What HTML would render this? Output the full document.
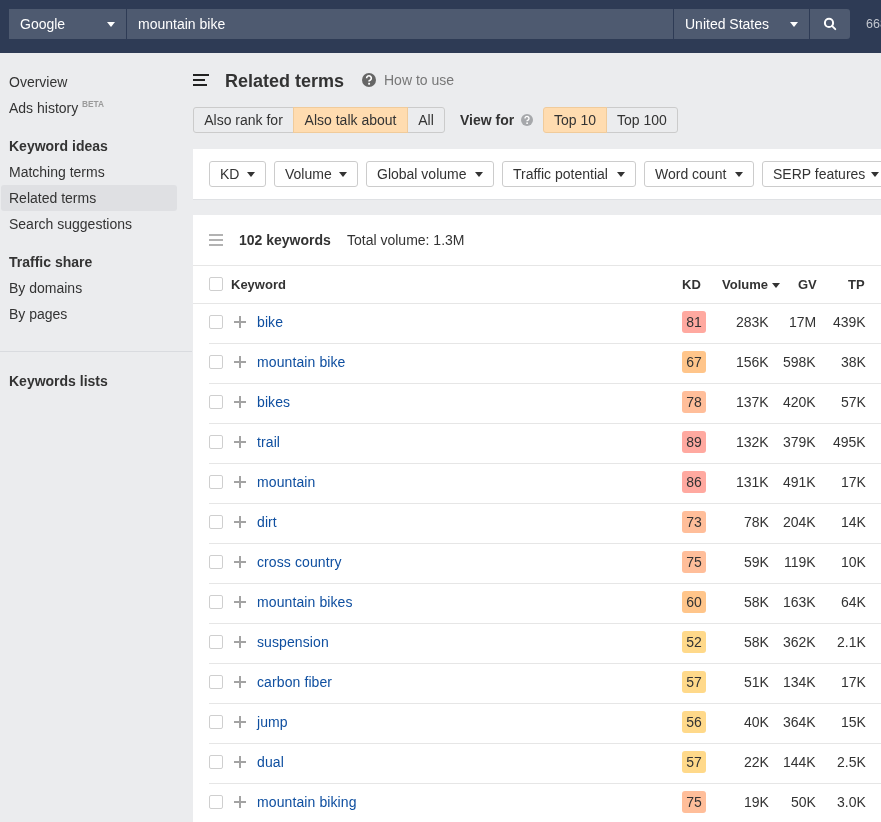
<!DOCTYPE html>
<html><head><meta charset="utf-8">
<style>
*{box-sizing:border-box;margin:0;padding:0}
html,body{width:881px;height:822px;overflow:hidden}
body>*{will-change:transform}
body{font-family:"Liberation Sans",sans-serif;background:#ebecee;color:#333;font-size:14px;position:relative}
.abs{position:absolute;white-space:nowrap}
#hdr{position:absolute;left:0;top:0;width:881px;height:53px;background:#2e3b55}
.inp{position:absolute;top:9px;height:30px;background:#4e5a70;color:#fff;font-size:14px;line-height:30px}
.caret{position:absolute;width:0;height:0;border-left:4px solid transparent;border-right:4px solid transparent;border-top:5px solid #fff}
.side{position:absolute;left:9px;font-size:14px;color:#333;white-space:nowrap}
.sb{font-weight:bold}
.btn{position:absolute;top:107px;height:26px;border:1px solid #cbcbcb;background:#ebecee;font-size:14px;line-height:24px;color:#333;text-align:center}
.on{background:#ffdcb0;border-color:#f0cb9b}
.panel{position:absolute;left:193px;background:#fff}
.fb{position:absolute;top:161px;height:26px;border:1px solid #cccccc;border-radius:3px;background:#fff;font-size:14px;line-height:24px;color:#333;padding-left:10px}
.fb .caret{border-left-width:4px;border-right-width:4px;border-top-color:#333;top:10px}
.row{position:absolute;left:193px;width:688px;height:40px}
.cb{position:absolute;width:14px;height:14px;border:1px solid #cfcfcf;border-radius:2px;background:#fff}
.kw{position:absolute;left:257px;color:#0f4fa0;font-size:14px;letter-spacing:0.1px}
.kd{position:absolute;left:682px;width:24px;height:22px;border-radius:3px;text-align:center;line-height:22px;font-size:14px;color:#333}
.num{position:absolute;font-size:14px;color:#333;text-align:right}
.line{position:absolute;height:1px;background:#e6e6e6}
.plus{position:absolute;width:12px;height:12px}
.plus:before{content:"";position:absolute;left:5px;top:0;width:2px;height:12px;background:#a3a3a3}
.plus:after{content:"";position:absolute;left:0;top:5px;width:12px;height:2px;background:#a3a3a3}
</style></head><body>
<div id="hdr">
  <div class="inp" style="left:9px;width:117px"><span style="position:absolute;left:11px">Google</span><div class="caret" style="left:98px;top:13px"></div></div>
  <div class="inp" style="left:127px;width:546px"><span style="position:absolute;left:11px">mountain bike</span></div>
  <div class="inp" style="left:674px;width:135px"><span style="position:absolute;left:11px">United States</span><div class="caret" style="left:116px;top:13px"></div></div>
  <div class="inp" style="left:810px;width:40px;border-radius:0 3px 3px 0"><svg width="40" height="30" style="position:absolute;left:0;top:0"><circle cx="19" cy="13.9" r="4.1" fill="none" stroke="#fff" stroke-width="2"/><line x1="22.2" y1="17.1" x2="25.3" y2="20.2" stroke="#fff" stroke-width="1.9" stroke-linecap="round"/></svg></div>
  <span class="abs" style="left:866px;top:17px;color:#c3c7cf;font-size:12.5px">668</span>
</div>

<!-- sidebar -->
<div class="side" style="top:74px">Overview</div>
<div class="side" style="top:100px">Ads history</div>
<div class="abs" style="left:82px;top:98.5px;font-size:8.3px;font-weight:bold;color:#9a9a9a">BETA</div>
<div class="side sb" style="top:138px">Keyword ideas</div>
<div class="side" style="top:164px">Matching terms</div>
<div class="abs" style="left:1px;top:185px;width:176px;height:26px;background:#dfe0e3;border-radius:3px"></div>
<div class="side" style="top:190px">Related terms</div>
<div class="side" style="top:216px">Search suggestions</div>
<div class="side sb" style="top:254px">Traffic share</div>
<div class="side" style="top:280px">By domains</div>
<div class="side" style="top:306px">By pages</div>
<div class="abs" style="left:0;top:351px;width:192px;height:1px;background:#d9dbdf"></div>
<div class="side sb" style="top:373px">Keywords lists</div>

<!-- title -->
<svg class="abs" style="left:193px;top:74px" width="16" height="12"><rect x="0" y="0" width="16" height="2" fill="#222"/><rect x="0" y="5" width="12" height="2" fill="#222"/><rect x="0" y="10" width="14" height="2" fill="#222"/></svg>
<div class="abs" style="left:225px;top:71px;font-size:18px;font-weight:bold;color:#333">Related terms</div>
<svg class="abs" style="left:362px;top:73px" width="14" height="14" viewBox="0 0 12 12"><circle cx="6" cy="6" r="6" fill="#666"/><path d="M4 4.5 A2 2 0 1 1 7.3 5.9 L6.1 6.8 V7.3" fill="none" stroke="#fff" stroke-width="1.4"/><rect x="5.3" y="8.4" width="1.6" height="1.6" fill="#fff"/></svg>
<div class="abs" style="left:384px;top:72px;font-size:14px;color:#777">How to use</div>

<div class="btn" style="left:193px;width:101px;border-radius:3px 0 0 3px">Also rank for</div>
<div class="btn on" style="left:293px;width:115px;z-index:2">Also talk about</div>
<div class="btn" style="left:407px;width:38px;border-radius:0 3px 3px 0">All</div>
<div class="abs" style="left:460px;top:112px;font-weight:bold;font-size:14px;color:#333">View for</div>
<svg class="abs" style="left:521px;top:114px" width="12" height="12" viewBox="0 0 12 12"><circle cx="6" cy="6" r="6" fill="#a6a8ab"/><path d="M4 4.5 A2 2 0 1 1 7.3 5.9 L6.1 6.8 V7.3" fill="none" stroke="#fff" stroke-width="1.4"/><rect x="5.3" y="8.4" width="1.6" height="1.6" fill="#fff"/></svg>
<div class="btn on" style="left:543px;width:64px;border-radius:3px 0 0 3px;z-index:2">Top 10</div>
<div class="btn" style="left:606px;width:72px;border-radius:0 3px 3px 0">Top 100</div>

<!-- filter panel -->
<div class="panel" style="top:149px;width:688px;height:51px;border-bottom:1px solid #dfe1e4"></div>
<div class="fb" style="left:209px;width:57px">KD<div class="caret" style="left:37px"></div></div>
<div class="fb" style="left:274px;width:84px">Volume<div class="caret" style="left:64px"></div></div>
<div class="fb" style="left:366px;width:128px">Global volume<div class="caret" style="left:108px"></div></div>
<div class="fb" style="left:502px;width:134px">Traffic potential<div class="caret" style="left:114px"></div></div>
<div class="fb" style="left:644px;width:110px">Word count<div class="caret" style="left:90px"></div></div>
<div class="fb" style="left:762px;width:130px">SERP features<div class="caret" style="left:108px"></div></div>

<!-- table panel -->
<div class="panel" style="top:215px;width:688px;height:607px"></div>
<!--TBL-->
<svg class="abs" style="left:209px;top:234px" width="14" height="12"><rect x="0" y="0" width="14" height="2" fill="#b2b2b2"/><rect x="0" y="5" width="14" height="2" fill="#b2b2b2"/><rect x="0" y="10" width="14" height="2" fill="#b2b2b2"/></svg>
<div class="abs" style="left:239px;top:232px;font-weight:bold;font-size:14px;color:#333">102 keywords</div>
<div class="abs" style="left:347px;top:232px;font-size:14px;color:#333">Total volume: 1.3M</div>
<div class="line" style="left:193px;top:265px;width:688px"></div>
<div class="cb" style="left:209px;top:277px"></div>
<div class="abs" style="left:231px;top:277px;font-weight:bold;font-size:13px;color:#333">Keyword</div>
<div class="abs" style="left:682px;top:277px;font-weight:bold;font-size:13px;color:#333">KD</div>
<div class="abs" style="left:722px;top:277px;font-weight:bold;font-size:13px;color:#333">Volume</div>
<div class="caret" style="left:772px;top:283px;border-left-width:4px;border-right-width:4px;border-top:5px solid #333"></div>
<div class="abs" style="left:798px;top:277px;font-weight:bold;font-size:13px;color:#333">GV</div>
<div class="abs" style="left:848px;top:277px;font-weight:bold;font-size:13px;color:#333">TP</div>
<div class="line" style="left:193px;top:303px;width:688px"></div>
<div class="cb" style="left:209px;top:315px"></div>
<div class="plus" style="left:234px;top:316px"></div>
<div class="kw abs" style="top:314px">bike</div>
<div class="kd abs" style="top:311px;background:#ffa9a0">81</div>
<div class="num abs" style="right:112.5px;top:314px">283K</div>
<div class="num abs" style="right:65px;top:314px">17M</div>
<div class="num abs" style="right:15.5px;top:314px">439K</div>
<div class="line" style="left:209px;top:343px;width:672px"></div>
<div class="cb" style="left:209px;top:355px"></div>
<div class="plus" style="left:234px;top:356px"></div>
<div class="kw abs" style="top:354px">mountain bike</div>
<div class="kd abs" style="top:351px;background:#ffc58a">67</div>
<div class="num abs" style="right:112.5px;top:354px">156K</div>
<div class="num abs" style="right:65px;top:354px">598K</div>
<div class="num abs" style="right:15.5px;top:354px">38K</div>
<div class="line" style="left:209px;top:383px;width:672px"></div>
<div class="cb" style="left:209px;top:395px"></div>
<div class="plus" style="left:234px;top:396px"></div>
<div class="kw abs" style="top:394px">bikes</div>
<div class="kd abs" style="top:391px;background:#ffbe9a">78</div>
<div class="num abs" style="right:112.5px;top:394px">137K</div>
<div class="num abs" style="right:65px;top:394px">420K</div>
<div class="num abs" style="right:15.5px;top:394px">57K</div>
<div class="line" style="left:209px;top:423px;width:672px"></div>
<div class="cb" style="left:209px;top:435px"></div>
<div class="plus" style="left:234px;top:436px"></div>
<div class="kw abs" style="top:434px">trail</div>
<div class="kd abs" style="top:431px;background:#ffa9a0">89</div>
<div class="num abs" style="right:112.5px;top:434px">132K</div>
<div class="num abs" style="right:65px;top:434px">379K</div>
<div class="num abs" style="right:15.5px;top:434px">495K</div>
<div class="line" style="left:209px;top:463px;width:672px"></div>
<div class="cb" style="left:209px;top:475px"></div>
<div class="plus" style="left:234px;top:476px"></div>
<div class="kw abs" style="top:474px">mountain</div>
<div class="kd abs" style="top:471px;background:#ffa9a0">86</div>
<div class="num abs" style="right:112.5px;top:474px">131K</div>
<div class="num abs" style="right:65px;top:474px">491K</div>
<div class="num abs" style="right:15.5px;top:474px">17K</div>
<div class="line" style="left:209px;top:503px;width:672px"></div>
<div class="cb" style="left:209px;top:515px"></div>
<div class="plus" style="left:234px;top:516px"></div>
<div class="kw abs" style="top:514px">dirt</div>
<div class="kd abs" style="top:511px;background:#ffbe9a">73</div>
<div class="num abs" style="right:112.5px;top:514px">78K</div>
<div class="num abs" style="right:65px;top:514px">204K</div>
<div class="num abs" style="right:15.5px;top:514px">14K</div>
<div class="line" style="left:209px;top:543px;width:672px"></div>
<div class="cb" style="left:209px;top:555px"></div>
<div class="plus" style="left:234px;top:556px"></div>
<div class="kw abs" style="top:554px">cross country</div>
<div class="kd abs" style="top:551px;background:#ffbe9a">75</div>
<div class="num abs" style="right:112.5px;top:554px">59K</div>
<div class="num abs" style="right:65px;top:554px">119K</div>
<div class="num abs" style="right:15.5px;top:554px">10K</div>
<div class="line" style="left:209px;top:583px;width:672px"></div>
<div class="cb" style="left:209px;top:595px"></div>
<div class="plus" style="left:234px;top:596px"></div>
<div class="kw abs" style="top:594px">mountain bikes</div>
<div class="kd abs" style="top:591px;background:#ffc58a">60</div>
<div class="num abs" style="right:112.5px;top:594px">58K</div>
<div class="num abs" style="right:65px;top:594px">163K</div>
<div class="num abs" style="right:15.5px;top:594px">64K</div>
<div class="line" style="left:209px;top:623px;width:672px"></div>
<div class="cb" style="left:209px;top:635px"></div>
<div class="plus" style="left:234px;top:636px"></div>
<div class="kw abs" style="top:634px">suspension</div>
<div class="kd abs" style="top:631px;background:#ffd98a">52</div>
<div class="num abs" style="right:112.5px;top:634px">58K</div>
<div class="num abs" style="right:65px;top:634px">362K</div>
<div class="num abs" style="right:15.5px;top:634px">2.1K</div>
<div class="line" style="left:209px;top:663px;width:672px"></div>
<div class="cb" style="left:209px;top:675px"></div>
<div class="plus" style="left:234px;top:676px"></div>
<div class="kw abs" style="top:674px">carbon fiber</div>
<div class="kd abs" style="top:671px;background:#ffd98a">57</div>
<div class="num abs" style="right:112.5px;top:674px">51K</div>
<div class="num abs" style="right:65px;top:674px">134K</div>
<div class="num abs" style="right:15.5px;top:674px">17K</div>
<div class="line" style="left:209px;top:703px;width:672px"></div>
<div class="cb" style="left:209px;top:715px"></div>
<div class="plus" style="left:234px;top:716px"></div>
<div class="kw abs" style="top:714px">jump</div>
<div class="kd abs" style="top:711px;background:#ffd98a">56</div>
<div class="num abs" style="right:112.5px;top:714px">40K</div>
<div class="num abs" style="right:65px;top:714px">364K</div>
<div class="num abs" style="right:15.5px;top:714px">15K</div>
<div class="line" style="left:209px;top:743px;width:672px"></div>
<div class="cb" style="left:209px;top:755px"></div>
<div class="plus" style="left:234px;top:756px"></div>
<div class="kw abs" style="top:754px">dual</div>
<div class="kd abs" style="top:751px;background:#ffd98a">57</div>
<div class="num abs" style="right:112.5px;top:754px">22K</div>
<div class="num abs" style="right:65px;top:754px">144K</div>
<div class="num abs" style="right:15.5px;top:754px">2.5K</div>
<div class="line" style="left:209px;top:783px;width:672px"></div>
<div class="cb" style="left:209px;top:795px"></div>
<div class="plus" style="left:234px;top:796px"></div>
<div class="kw abs" style="top:794px">mountain biking</div>
<div class="kd abs" style="top:791px;background:#ffbe9a">75</div>
<div class="num abs" style="right:112.5px;top:794px">19K</div>
<div class="num abs" style="right:65px;top:794px">50K</div>
<div class="num abs" style="right:15.5px;top:794px">3.0K</div>
<div class="line" style="left:209px;top:823px;width:672px"></div>
<!--/TBL-->
</body></html>
